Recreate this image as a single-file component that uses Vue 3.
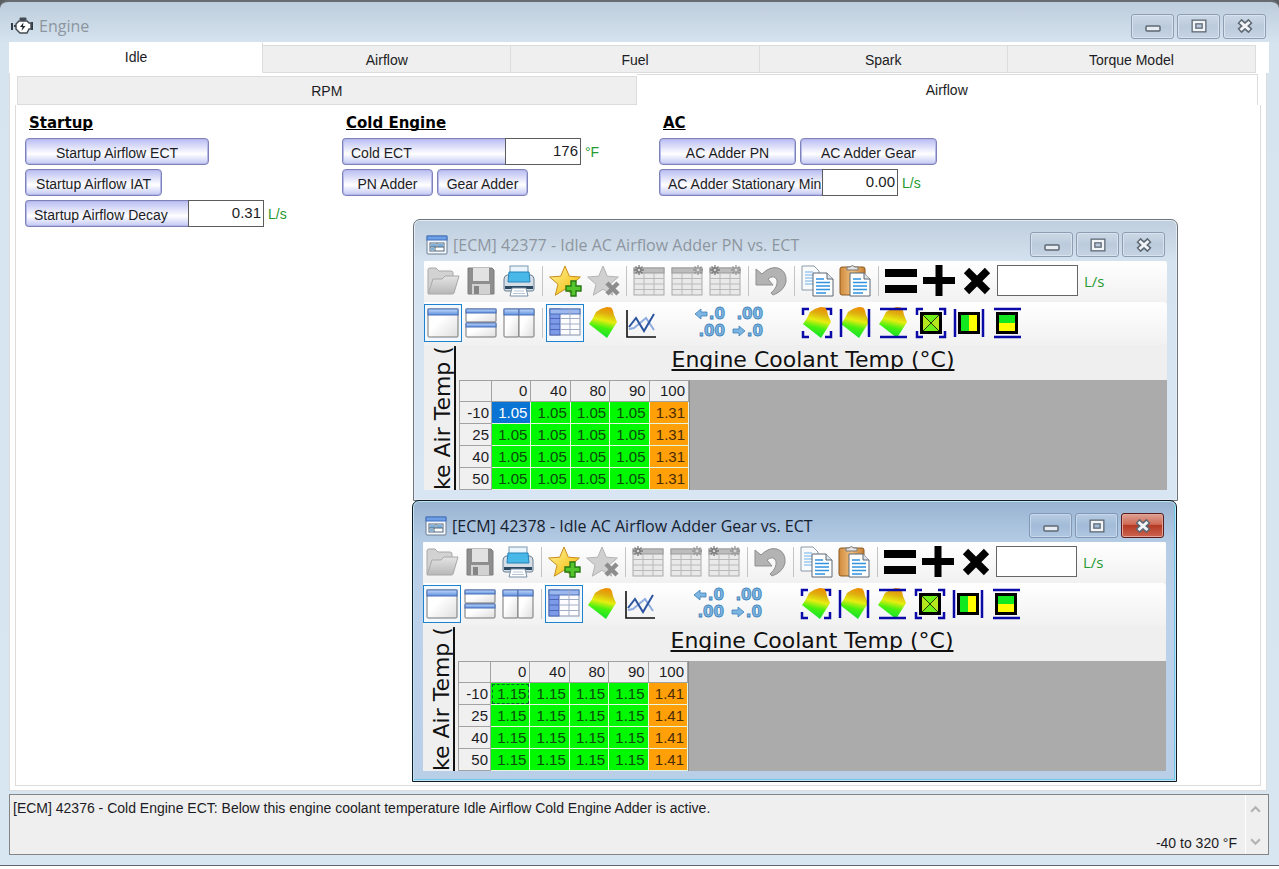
<script setup>
import { ref } from 'vue'

const mainTabs = ['Idle', 'Airflow', 'Fuel', 'Spark', 'Torque Model']
const mainTab = ref('Idle')
const subTabs = ['RPM', 'Airflow']
const subTab = ref('Airflow')

const decay = ref('0.31')
const coldEct = ref('176')
const stationary = ref('0.00')

const columns = ['0', '40', '80', '90', '100']
const rows = ['-10', '25', '40', '50']

const windows = [
  { id: 'pn', title: '[ECM] 42377 - Idle AC Airflow Adder PN vs. ECT', active: false, low: '1.05', high: '1.31' },
  { id: 'gear', title: '[ECM] 42378 - Idle AC Airflow Adder Gear vs. ECT', active: true, low: '1.15', high: '1.41' }
]

const blob = 'M9 5 Q14 1 19.7 0 L24 .6 Q26 2 27 8 L30 15 L20 31 L2 17 Q6 12 9 5 Z'
const star = 'M16 1 L20.3 11.2 L31.4 12 L23 19.3 L25.7 30.2 L16 24.3 L6.3 30.2 L9 19.3 L.6 12 L11.7 11.2 Z'
const corners = 'M2 8V2H8 M24 2H30V8 M30 24V30H24 M8 30H2V24'
</script>

<template>
  <main class="frame">
    <svg class="defs" aria-hidden="true">
      <defs>
        <linearGradient id="g-surface" x1="0.7" y1="0" x2="0.5" y2="1">
          <stop offset="0" stop-color="#f08a00" />
          <stop offset="0.22" stop-color="#dfae10" />
          <stop offset="0.45" stop-color="#e6ee10" />
          <stop offset="0.68" stop-color="#48f010" />
          <stop offset="1" stop-color="#10e030" />
        </linearGradient>
        <linearGradient id="g-star" x1="0" y1="0" x2="1" y2="1">
          <stop offset="0" stop-color="#fff3a0" />
          <stop offset="0.6" stop-color="#f8cf3c" />
          <stop offset="1" stop-color="#efae20" />
        </linearGradient>
        <linearGradient id="g-gray" x1="0" y1="0" x2="0" y2="1">
          <stop offset="0" stop-color="#e4e4e4" />
          <stop offset="1" stop-color="#b8b8b8" />
        </linearGradient>
        <linearGradient id="g-blue" x1="0" y1="0" x2="0" y2="1">
          <stop offset="0" stop-color="#c3dafa" />
          <stop offset="1" stop-color="#5f8fdf" />
        </linearGradient>
        <linearGradient id="g-pane" x1="0" y1="0" x2="1" y2="1">
          <stop offset="0.4" stop-color="#fff" />
          <stop offset="1" stop-color="#dedede" />
        </linearGradient>
        <linearGradient id="g-clip" x1="0" y1="0" x2="1" y2="0">
          <stop offset="0" stop-color="#d08a3c" />
          <stop offset="0.5" stop-color="#f0c080" />
          <stop offset="1" stop-color="#c67d30" />
        </linearGradient>
      </defs>
    </svg>

    <header class="titlebar">
      <svg class="engine" viewBox="0 0 22 18">
        <path d="M9 1H15V3H9Z M11 3H13V5H11Z" fill="#444b52" stroke="#444b52" />
        <path d="M1 6V13 M3 9H5 M21 5V13" stroke="#333b44" stroke-width="2" fill="none" />
        <path d="M5 7L8 4H16L18 6H20V12H18L16 16H9L5 12Z" fill="#fff" stroke="#444b52" stroke-width="1.5" />
        <path d="M12.5 5.5L9 10H11.5L10.5 14L14.5 9H12Z" fill="#20262c" />
      </svg>
      <h1 class="caption">Engine</h1>
      <div class="captions">
        <button class="cap" aria-label="Minimize">
          <svg viewBox="0 0 16 14"><rect x="1" y="7" width="14" height="5" rx="1" fill="#e8edf3" stroke="#5d6873" stroke-width="1.5" /></svg>
        </button>
        <button class="cap" aria-label="Maximize">
          <svg viewBox="0 0 16 14"><rect x="3" y="3" width="10" height="8" fill="none" stroke="#5d6873" stroke-width="5" /><rect x="3" y="3" width="10" height="8" fill="none" stroke="#f2f5f8" stroke-width="2.4" /></svg>
        </button>
        <button class="cap" aria-label="Close">
          <svg viewBox="0 0 16 14"><path d="M2.5 2L13.5 12M13.5 2L2.5 12" stroke="#5d6873" stroke-width="6" /><path d="M3.5 3L12.5 11M12.5 3L3.5 11" stroke="#f2f5f8" stroke-width="3" /></svg>
        </button>
      </div>
    </header>

    <div class="client">
      <nav class="tabs">
        <button
          v-for="t in mainTabs" :key="t" class="tab" :class="{ on: mainTab === t }"
          @click="mainTab = t"
        >{{ t }}</button>
      </nav>
      <section class="page">
        <nav class="subtabs">
          <button
            v-for="t in subTabs" :key="t" class="subtab" :class="{ on: subTab === t }"
            @click="subTab = t"
          >{{ t }}</button>
        </nav>
        <div class="panel">
          <section class="group">
            <h2>Startup</h2>
            <div class="line"><button class="pill w184">Startup Airflow ECT</button></div>
            <div class="line"><button class="pill w137">Startup Airflow IAT</button></div>
            <div class="line">
              <label class="pill tag" for="decay">Startup Airflow Decay</label>
              <input id="decay" v-model="decay" class="value">
              <span class="unit">L/s</span>
            </div>
          </section>
          <section class="group">
            <h2>Cold Engine</h2>
            <div class="line">
              <label class="pill tag" for="coldect">Cold ECT</label>
              <input id="coldect" v-model="coldEct" class="value">
              <span class="unit">°F</span>
            </div>
            <div class="line">
              <button class="pill w91">PN Adder</button>
              <button class="pill w91">Gear Adder</button>
            </div>
          </section>
          <section class="group">
            <h2>AC</h2>
            <div class="line">
              <button class="pill w137">AC Adder PN</button>
              <button class="pill w137">AC Adder Gear</button>
            </div>
            <div class="line">
              <label class="pill tag" for="stationary">AC Adder Stationary Min</label>
              <input id="stationary" v-model="stationary" class="value">
              <span class="unit">L/s</span>
            </div>
          </section>
        </div>
      </section>

      <footer class="status">
        <div class="message">
          <p>[ECM] 42376 - Cold Engine ECT: Below this engine coolant temperature Idle Airflow Cold Engine Adder is active.</p>
          <p class="range">-40 to 320 °F</p>
        </div>
        <div class="scroll">
          <button aria-label="Scroll up"><svg viewBox="0 0 10 8"><path d="M1 6L5 2L9 6" /></svg></button>
          <button aria-label="Scroll down"><svg viewBox="0 0 10 8"><path d="M1 2L5 6L9 2" /></svg></button>
        </div>
      </footer>
    </div>

    <section v-for="w in windows" :key="w.id" class="child" :class="[w.id, { active: w.active }]">
      <header class="childbar">
        <svg class="formicon" viewBox="0 0 22 20">
          <rect x="1" y="1" width="20" height="18" rx="1" fill="#f4f8fc" stroke="#6d7f93" />
          <rect x="1" y="1" width="20" height="4" fill="#6f9fe4" stroke="#3f6fc0" />
          <rect x="4" y="8" width="14" height="8" fill="#fff" stroke="#53677c" />
          <path d="M5 9H10V12H5ZM12 9H17V12H12ZM5 13H8V15H5Z" fill="#7ab0dc" />
          <path d="M11 8V12M9 12V16M4 12H18" stroke="#53677c" />
        </svg>
        <h2 class="caption">{{ w.title }}</h2>
        <div class="captions">
          <button class="cap" aria-label="Minimize">
            <svg viewBox="0 0 16 14"><rect x="1" y="7" width="14" height="5" rx="1" fill="#e8edf3" stroke="#5d6873" stroke-width="1.5" /></svg>
          </button>
          <button class="cap" aria-label="Maximize">
            <svg viewBox="0 0 16 14"><rect x="3" y="3" width="10" height="8" fill="none" stroke="#5d6873" stroke-width="5" /><rect x="3" y="3" width="10" height="8" fill="none" stroke="#f2f5f8" stroke-width="2.4" /></svg>
          </button>
          <button class="cap close" aria-label="Close">
            <svg viewBox="0 0 16 14"><path d="M2.5 2L13.5 12M13.5 2L2.5 12" stroke="#5d6873" stroke-width="6" /><path d="M3.5 3L12.5 11M12.5 3L3.5 11" stroke="#f2f5f8" stroke-width="3" /></svg>
          </button>
        </div>
      </header>

      <div class="body">
        <div class="toolbar">
          <button class="tool" aria-label="Open">
            <svg viewBox="0 0 32 32">
              <path d="M1 28V5Q1 3 3 3H9L12 6H24Q26 6 26 8V12" fill="#d2d2d2" stroke="#a8a8a8" />
              <path d="M1 29L6 14H15L18 11H32L27 28Q27 29 25 29Z" fill="url(#g-gray)" stroke="#a8a8a8" />
            </svg>
          </button>
          <button class="tool" aria-label="Save">
            <svg viewBox="0 0 32 32">
              <path d="M3 3H27L29 5V29H3Z" fill="#8e8e8e" stroke="#7c7c7c" />
              <rect x="8" y="3" width="16" height="13" fill="#e2e2e2" />
              <rect x="7" y="19" width="18" height="10" fill="#d2d2d2" />
              <rect x="9" y="21" width="5" height="8" fill="#858585" />
            </svg>
          </button>
          <button class="tool" aria-label="Print">
            <svg viewBox="0 0 32 32">
              <rect x="7" y="1" width="18" height="12" fill="#eaf4fc" stroke="#7d97b0" />
              <path d="M4 10H28Q31 11 31 14V24Q31 26 29 26H3Q1 26 1 24V14Q1 11 4 10Z" fill="#d5dee7" stroke="#687d92" />
              <path d="M6 7H26L27 17H5Z" fill="#48b8e8" stroke="#2582b8" />
              <path d="M2 21H30V24H2Z" fill="#2d4962" />
              <path d="M9 23H23L25 31H7Z" fill="#fff" stroke="#7990a6" />
              <path d="M11 26H21M10 28.5H22" stroke="#b9c7d4" />
            </svg>
          </button>
          <i class="sep"></i>
          <button class="tool" aria-label="Add favorite">
            <svg viewBox="0 0 32 32">
              <path :d="star" fill="url(#g-star)" stroke="#c98d1c" stroke-linejoin="round" />
              <path d="M22 16H27V21H32V26H27V31H22V26H17V21H22Z" fill="#55c52e" stroke="#257a14" stroke-width="1.4" />
            </svg>
          </button>
          <button class="tool" aria-label="Remove favorite">
            <svg viewBox="0 0 32 32">
              <path :d="star" fill="#d0d0d0" stroke="#b4b4b4" stroke-linejoin="round" />
              <path d="M20 18L31 29M31 18L20 29" stroke="#8d8d8d" stroke-width="4.5" />
            </svg>
          </button>
          <i class="sep"></i>
          <button v-for="side in ['left', 'right', 'both']" :key="side" class="tool" :aria-label="'Table axis ' + side">
            <svg viewBox="0 0 32 32">
              <rect x="1" y="3" width="30" height="27" fill="#e9e9e9" stroke="#a9a9a9" />
              <rect x="1" y="3" width="30" height="5" fill="#bdbdbd" stroke="#9b9b9b" />
              <path d="M1 13.5H31M1 19H31M1 24.5H31M11 8V30M21 8V30" stroke="#b9b9b9" fill="none" />
              <path v-if="side !== 'right'" d="M6 0V10M1 5H11M2.5 1.5L9.5 8.5M9.5 1.5L2.5 8.5" stroke="#7b7b7b" stroke-width="1.3" />
              <circle v-if="side !== 'right'" cx="6" cy="5" r="2" fill="#d5d5d5" stroke="#6d6d6d" />
              <path v-if="side !== 'left'" d="M27 0V10M22 5H32M23.5 1.5L30.5 8.5M30.5 1.5L23.5 8.5" stroke="#949494" stroke-width="1.3" />
              <circle v-if="side !== 'left'" cx="27" cy="5" r="2" fill="#d5d5d5" stroke="#a0a0a0" />
            </svg>
          </button>
          <i class="sep"></i>
          <button class="tool" aria-label="Undo">
            <svg viewBox="0 0 32 32">
              <path d="M1 4L7 9Q15 1 23 3Q32 6 31 17Q29 26 18 30L16 28Q23 22 22 15Q19 9 13 14L18 20H1Z" fill="#b3b3b3" stroke="#8f8f8f" />
            </svg>
          </button>
          <i class="sep"></i>
          <button class="tool" aria-label="Copy">
            <svg viewBox="0 0 32 32">
              <path d="M1 1H13L18 6V25H1Z" fill="#f8fafc" stroke="#8b99a8" />
              <path d="M4 7H12M4 10H15M4 13H12M4 16H12M4 19H12" stroke="#6fb0e6" />
              <path d="M12 8H26L32 14V31H12Z" fill="#fff" stroke="#5a6672" />
              <path d="M26 8V14H32" fill="#dde3e9" stroke="#5a6672" />
              <path d="M15 14H23M15 17.5H29M15 21H29M15 24.5H29M15 28H25" stroke="#2f93e0" stroke-width="1.4" />
            </svg>
          </button>
          <button class="tool" aria-label="Paste">
            <svg viewBox="0 0 32 32">
              <rect x="1" y="2" width="25" height="28" rx="2" fill="url(#g-clip)" stroke="#8b5a22" />
              <path d="M8 5V2H11Q13 -1 16 2H19V5Z" fill="#e4e4e4" stroke="#777" />
              <path d="M11 8H25L31 14V31H11Z" fill="#fff" stroke="#5a6672" />
              <path d="M25 8V14H31" fill="#dde3e9" stroke="#5a6672" />
              <path d="M14 14H22M14 17.5H28M14 21H28M14 24.5H28M14 28H24" stroke="#2f93e0" stroke-width="1.4" />
            </svg>
          </button>
          <i class="sep"></i>
          <button class="tool" aria-label="Set value">
            <svg viewBox="0 0 32 32"><path d="M0 4H32V12H0ZM0 20H32V28H0Z" /></svg>
          </button>
          <button class="tool" aria-label="Add value">
            <svg viewBox="0 0 32 32"><path d="M12.5 0H19.5V12H32V19H19.5V31H12.5V19H0V12H12.5Z" /></svg>
          </button>
          <button class="tool" aria-label="Multiply value">
            <svg viewBox="0 0 32 32"><path d="M5.5 5.5L26.5 26.5M26.5 5.5L5.5 26.5" stroke="#000" stroke-width="7.5" /></svg>
          </button>
          <input class="amount" aria-label="Amount">
          <span class="unit big">L/s</span>
        </div>

        <div class="toolbar second">
          <button class="tool picked" aria-label="Single pane">
            <svg viewBox="0 0 32 32">
              <rect x="1" y="2" width="30" height="28" rx="1" fill="url(#g-pane)" stroke="#777" />
              <rect x="1" y="2" width="30" height="6" fill="url(#g-blue)" stroke="#4a70b8" />
            </svg>
          </button>
          <button class="tool" aria-label="Stacked panes">
            <svg viewBox="0 0 32 32">
              <rect x="1" y="2" width="30" height="13" rx="1" fill="url(#g-pane)" stroke="#777" />
              <rect x="1" y="2" width="30" height="4" fill="url(#g-blue)" stroke="#4a70b8" />
              <rect x="1" y="16" width="30" height="14" rx="1" fill="url(#g-pane)" stroke="#777" />
              <rect x="1" y="16" width="30" height="4" fill="url(#g-blue)" stroke="#4a70b8" />
            </svg>
          </button>
          <button class="tool" aria-label="Side panes">
            <svg viewBox="0 0 32 32">
              <rect x="1" y="2" width="15" height="28" rx="1" fill="url(#g-pane)" stroke="#777" />
              <rect x="1" y="2" width="15" height="6" fill="url(#g-blue)" stroke="#4a70b8" />
              <rect x="16" y="2" width="15" height="28" rx="1" fill="url(#g-pane)" stroke="#777" />
              <rect x="16" y="2" width="15" height="6" fill="url(#g-blue)" stroke="#4a70b8" />
            </svg>
          </button>
          <i class="sep"></i>
          <button class="tool picked" aria-label="Table view">
            <svg viewBox="0 0 32 32">
              <rect x="1" y="2" width="30" height="26" fill="#fdfdff" stroke="#8790a8" />
              <rect x="1" y="2" width="10" height="26" fill="#7d9ae8" stroke="#4a64b4" />
              <rect x="1" y="2" width="30" height="5" fill="#9db8ee" stroke="#4a70b8" />
              <path d="M11 11.5H31M11 17H31M11 22.5H31M21 2V28" stroke="#a3adc6" />
              <path d="M1 11.5H11M1 17H11M1 22.5H11" stroke="#4c65b8" />
            </svg>
          </button>
          <button class="tool" aria-label="Surface view">
            <svg viewBox="0 0 32 32"><path :d="blob" fill="url(#g-surface)" /></svg>
          </button>
          <button class="tool" aria-label="Chart view">
            <svg viewBox="0 0 32 32">
              <path d="M2 3V30H31" fill="none" stroke="#111" stroke-width="1.6" />
              <path d="M4 22L9 21L21 11L29 23" fill="none" stroke="#8dacdf" stroke-width="2" />
              <path d="M4 20L11 11L19 24L29 7" fill="none" stroke="#2c55a0" stroke-width="2" />
            </svg>
          </button>
          <button class="tool gap" aria-label="Fewer decimals">
            <svg class="digits" viewBox="0 0 32 32">
              <path d="M1 7L7 2V5H13V9H7V12Z" /><text x="31" y="12" text-anchor="end">.0</text>
              <text x="31" y="29" text-anchor="end">.00</text>
            </svg>
          </button>
          <button class="tool" aria-label="More decimals">
            <svg class="digits" viewBox="0 0 32 32">
              <text x="31" y="12" text-anchor="end">.00</text>
              <path d="M13 24L7 19V22H1V26H7V29Z" /><text x="31" y="29" text-anchor="end">.0</text>
            </svg>
          </button>
          <button class="tool gap" aria-label="Smooth surface">
            <svg viewBox="0 0 32 32"><path :d="corners" class="guide" /><path :d="blob" fill="url(#g-surface)" /></svg>
          </button>
          <button class="tool" aria-label="Smooth columns">
            <svg viewBox="0 0 32 32"><path :d="blob" fill="url(#g-surface)" /><path d="M2 2V30M30 2V30" class="guide" /></svg>
          </button>
          <button class="tool" aria-label="Smooth rows">
            <svg viewBox="0 0 32 32"><path :d="blob" fill="url(#g-surface)" /><path d="M3 2H30M3 30H30" class="guide" /></svg>
          </button>
          <button class="tool" aria-label="Interpolate area">
            <svg viewBox="0 0 32 32">
              <path :d="corners" class="guide" />
              <rect x="6.5" y="6.5" width="19" height="19" fill="#70ee18" stroke="#000" stroke-width="3" />
              <path d="M8 8L16 16L8 24ZM24 8L16 16L24 24Z" fill="#b4e81c" />
              <path d="M8 8L24 24M24 8L8 24" stroke="#233d05" />
            </svg>
          </button>
          <button class="tool" aria-label="Interpolate columns">
            <svg viewBox="0 0 32 32">
              <rect x="7" y="7" width="19" height="19" fill="#ff0" /><rect x="7" y="7" width="9" height="19" fill="#12e820" />
              <rect x="6.5" y="6.5" width="19" height="19" fill="none" stroke="#000" stroke-width="3" />
              <path d="M2 2V30M30 2V30" class="guide" />
            </svg>
          </button>
          <button class="tool" aria-label="Interpolate rows">
            <svg viewBox="0 0 32 32">
              <rect x="7" y="7" width="19" height="19" fill="#ff0" /><rect x="7" y="7" width="19" height="9" fill="#12e820" />
              <rect x="6.5" y="6.5" width="19" height="19" fill="none" stroke="#000" stroke-width="3" />
              <path d="M3 2H30M3 30H30" class="guide" />
            </svg>
          </button>
        </div>

        <div class="sheet">
          <div class="ylabel"><span>ke Air Temp (</span></div>
          <div class="xlabel">Engine Coolant Temp (°C)</div>
          <div class="gridarea">
            <table>
              <thead>
                <tr><th class="corner"></th><th v-for="c in columns" :key="c" scope="col">{{ c }}</th></tr>
              </thead>
              <tbody>
                <tr v-for="(r, ri) in rows" :key="r">
                  <th scope="row">{{ r }}</th>
                  <td
                    v-for="(c, ci) in columns" :key="c"
                    :class="{ hot: ci === 4, selected: !w.active && !ri && !ci, focused: w.active && !ri && !ci }"
                  >{{ ci === 4 ? w.high : w.low }}</td>
                </tr>
              </tbody>
            </table>
          </div>
        </div>
      </div>
    </section>
  </main>
</template>

<style>
body { background: #fff; }
#app { background: #5b5e62; }
</style>

<style scoped>
* { box-sizing: border-box; }
button, input { font: inherit; color: inherit; margin: 0; padding: 0; border: 0; background: none; border-radius: 0; }
h1, h2, p { margin: 0; font-weight: normal; }
svg { display: block; flex: none; }
.defs { position: absolute; width: 0; height: 0; }

.frame {
  position: relative;
  display: flex;
  flex-direction: column;
  min-height: calc(100vh - 3px);
  border-top: 2px solid #686c70;
  border-bottom: 1px solid #62666c;
  border-radius: 8px 8px 0 0;
  background: linear-gradient(#becddc, #d6e4f0 42px, #d8e6f2);
  box-shadow: 0 3px 0 #fff;
  font: 14px/18px "Liberation Sans", Arial, sans-serif;
  color: #1c1c24;
}
.titlebar { display: flex; align-items: center; height: 40px; padding: 8px 13px 0 11px; }
.engine { width: 22px; height: 18px; }
.caption { flex: 1; font: 16px/20px "Open Sans", "Noto Sans", sans-serif; color: #8d969f; white-space: nowrap; }
.titlebar .caption { padding-left: 6px; }
.captions { display: flex; gap: 3px; }
.cap {
  display: flex; align-items: center; justify-content: center;
  width: 43px; height: 25px; border: 1px solid #8d9db4; border-radius: 3px;
  background: linear-gradient(#cbd8e6, #bccbdc 50%, #c5d3e3);
  box-shadow: inset 0 0 0 1px #d8e3ee;
}
.cap svg { width: 16px; height: 14px; }

.client { flex: 1; display: flex; flex-direction: column; padding: 0 10px 10px 9px; }
.tabs { display: flex; align-items: flex-end; height: 31px; padding: 0 13px 0 1px; background: #fff; }
.tab { flex: 248; height: 28px; background: #efefef; border: 1px solid #dcdcdc; border-left: 0; padding-top: 1px; }
.tab.on { flex: 253; height: 31px; background: #fff; border-color: #fff #dcdcdc #fff #fff; padding: 0 0 2px; }
.page {
  flex: 1; display: flex; flex-direction: column; margin-right: 2px; padding: 1px 5px 4px;
  background: #fff; border: 1px solid #dcdcdc; border-top: 0;
}
.subtabs { display: flex; align-items: flex-end; height: 31px; padding: 0 3px 0 2px; }
.subtab { flex: 619; height: 29px; background: #efefef; border: 1px solid #dcdcdc; padding-top: 1px; }
.subtab.on { flex: 622; height: 31px; background: #fff; border-left: 0; border-bottom: 0; padding: 0 0 1px; }
.panel {
  flex: 1; display: grid; grid-template-columns: 317px 317px 1fr; align-items: start;
  padding: 5px 9px; border: 1px solid #dcdcdc; border-top: 0;
}
.group { display: flex; flex-direction: column; gap: 4px; }
.group h2 {
  padding: 2px 0 0 4px; font: bold 15px/22px "DejaVu Sans", Verdana, sans-serif; color: #000;
  text-decoration: underline; text-decoration-skip-ink: none;
}
.line { display: flex; gap: 4px; height: 27px; }
.pill {
  height: 27px; border: 1px solid #7e82b8; border-radius: 4px; padding-top: 2px; line-height: 25px; text-align: center;
  background: linear-gradient(#b9bdf2, #fff 60%, #eceefc 72%, #c3c8f4);
  box-shadow: inset 0 0 0 1px #b4b9ea; white-space: nowrap;
}
.w184 { width: 184px; }
.w137 { width: 137px; }
.w91 { width: 91px; }
.tag { width: 164px; padding-left: 8px; text-align: left; border-right: 0; border-radius: 4px 0 0 4px; overflow: hidden; }
.value {
  width: 76px; height: 27px; margin-left: -5px; padding: 0 2px 3px 0; border: 1px solid #5c5c5c;
  background: #fff; font-size: 15px; text-align: right;
}
.unit { line-height: 29px; color: #259a30; }

.status { display: flex; height: 61px; margin-top: 3px; border: 1px solid #858585; background: #efefef; }
.message { flex: 1; display: flex; flex-direction: column; justify-content: space-between; padding: 4px 8px 2px 3px; }
.range { text-align: right; }
.scroll { display: flex; flex-direction: column; justify-content: space-between; width: 23px; padding: 10px 3px 8px 0; border-left: 1px solid #fff; }
.scroll button { display: flex; justify-content: center; }
.scroll svg { width: 11px; height: 9px; fill: none; stroke: #b3b3b3; stroke-width: 2; }

.child {
  position: absolute; left: 413px; top: 217px; width: 765px; padding: 0 10px 10px;
  border: 1px solid #6e747a; border-radius: 7px 7px 0 0;
  background: linear-gradient(#bfcedd, #d5e2ef 42px, #d8e5f2);
  box-shadow: inset 0 0 0 1px #e4edf5;
}
.child.gear { left: 412px; top: 498px; }
.child.active {
  border-color: #111b22;
  background: linear-gradient(#98b3d1, #b5cce5 42px, #bcd2ea 110px, #b9cfe8);
  box-shadow: inset 0 0 0 1px #bfe4f5, inset -2px -2px 0 #6cc8e6;
}
.childbar { display: flex; align-items: center; height: 41px; padding: 8px 2px 0 2px; }
.formicon { width: 22px; height: 20px; }
.childbar .caption { padding-left: 5px; }
.active .caption { color: #14202e; }
.active .cap { border-color: #8097b8; background: linear-gradient(#b8cce3, #a2bbd8 50%, #b0c7e1); box-shadow: inset 0 0 0 1px #c6d8ea; }
.active .cap.close { border-color: #5a1c1c; background: linear-gradient(#dda294, #cf6a55 45%, #b53a24 50%, #cc6450); box-shadow: inset 0 0 0 1px #e2a498; }

.body { background: #efefef; }
.toolbar { display: flex; align-items: center; height: 41px; padding-bottom: 2px; background: linear-gradient(#fff, #f1f1f1); border-radius: 2px 4px 4px 2px; }
.toolbar.second { height: 43px; }
.tool { flex: none; display: flex; align-items: center; justify-content: center; width: 38px; height: 38px; }
.tool svg { width: 32px; height: 32px; overflow: visible; }
.tool.picked { border: 1px solid #1f82cf; background: #f3f8fd; }
.sep { flex: none; width: 1px; height: 30px; margin: 0 3px 0 4px; background: #c4c4c4; }
.gap { margin-left: 31px; }
.digits text { font: bold 15px "DejaVu Sans", sans-serif; }
.digits text, .digits path { fill: #7db6e2; stroke: #3c7fb8; stroke-width: 0.8px; }
.guide { fill: none; stroke: #0a0aa8; stroke-width: 2.5px; }
.amount { width: 81px; height: 31px; margin-left: 1px; border: 1px solid #666; background: #fff; }
.unit.big { margin-left: 6px; font: 15px/28px "Open Sans", "Noto Sans", sans-serif; }

.sheet { display: grid; grid-template: 35px 110px / 35px 1fr; }
.ylabel { grid-row: 1 / 3; overflow: hidden; }
.ylabel, .xlabel { font-family: "DejaVu Sans", Verdana, sans-serif; font-size: 22px; color: #111; }
.xlabel, .ylabel span { text-decoration: underline; text-decoration-skip-ink: none; }
.ylabel span {
  display: block; width: 35px; height: 145px; line-height: 27px; white-space: nowrap;
  writing-mode: vertical-rl; transform: rotate(180deg); text-underline-offset: 0;
  padding-right: 5px;
}
.xlabel { line-height: 29px; text-align: center; }
.gridarea { background: #ababab; }
table { border-collapse: separate; border-spacing: 0; table-layout: fixed; width: 231px; font-size: 15px; line-height: 20px; border-top: 1px solid #a0a0a0; border-right: 1px solid #8a8a8a; }
th, td { height: 22px; padding: 0 3px 0 0; text-align: right; font-weight: normal; border-right: 1px solid #e6f6e0; border-bottom: 1px solid #e6f6e0; }
thead th { height: 21px; }
th { background: #f0f0f0; border-color: #a2a2a2; }
.corner, tbody th { border-left: 1px solid #a2a2a2; }
.corner { width: 33px; }
tbody th { padding-right: 2px; }
td { background: #00f800; color: #0b4a0b; }
td.hot { background: #ffa008; color: #4a2c04; }
td.selected { background: #0a74d4; color: #fff; }
td.focused { outline: 1px dashed #063; outline-offset: -2px; }
</style>
